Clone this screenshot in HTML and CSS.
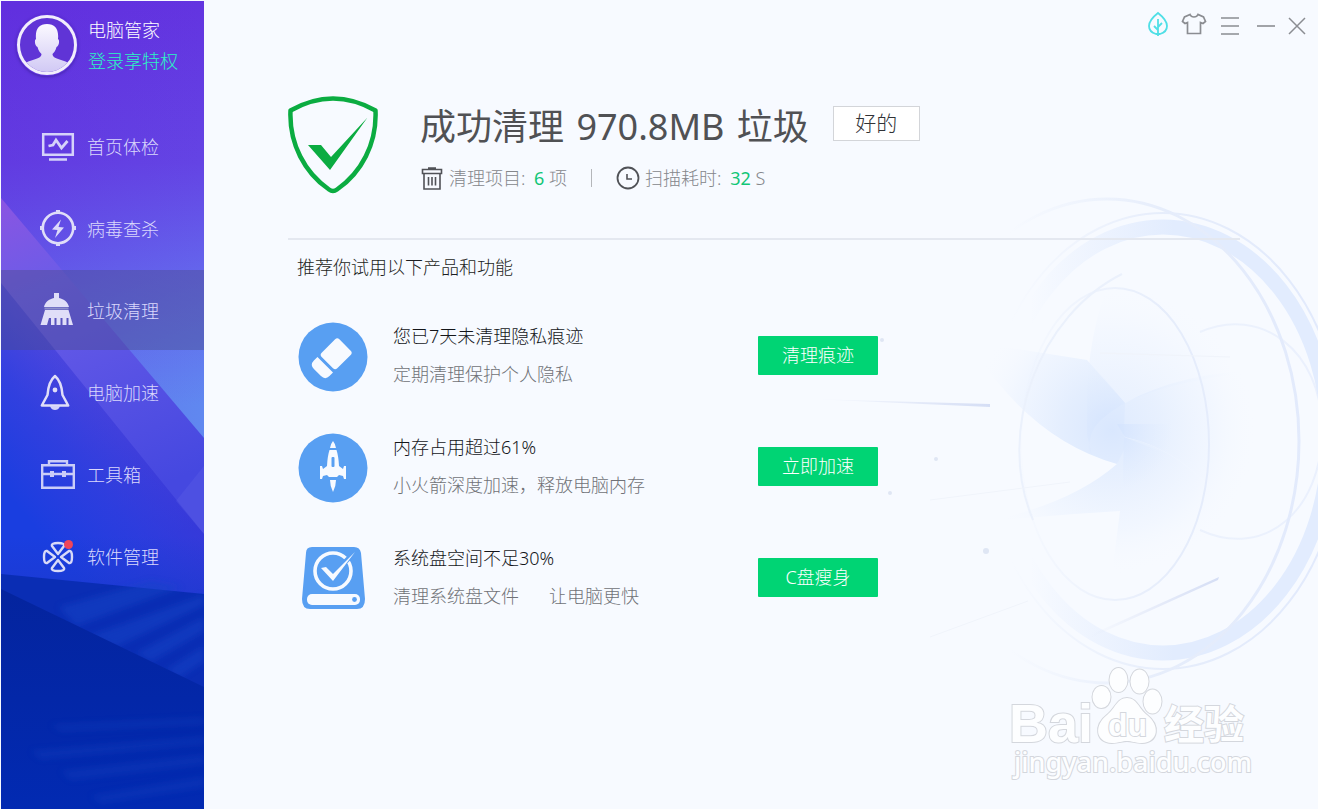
FILE: index.html
```html
<!DOCTYPE html>
<html lang="zh-CN">
<head>
<meta charset="utf-8">
<title>电脑管家</title>
<link rel="stylesheet" href="styles.css">
</head>
<body>
<div class="app">
  <aside class="sidebar">
    <svg class="sidebar-art" viewBox="0 0 203 808" preserveAspectRatio="none" aria-hidden="true">
      <defs>
        <linearGradient id="base" x1="0" y1="0" x2="0" y2="1">
          <stop offset="0" stop-color="#6334e0"/>
          <stop offset=".2" stop-color="#6444e4"/>
          <stop offset=".33" stop-color="#6464ec"/>
          <stop offset=".5" stop-color="#6088f0"/>
          <stop offset="1" stop-color="#6088f0"/>
        </linearGradient>
        <linearGradient id="left" x1="0" y1="0" x2="1" y2="0">
          <stop offset="0" stop-color="#5a1fd8" stop-opacity=".25"/>
          <stop offset="1" stop-color="#5a1fd8" stop-opacity="0"/>
        </linearGradient>
        <linearGradient id="band" x1="0" y1="200" x2="120" y2="500" gradientUnits="userSpaceOnUse">
          <stop offset="0" stop-color="#8a55e2"/>
          <stop offset=".3" stop-color="#6a5ce8"/>
          <stop offset="1" stop-color="#4548e0"/>
        </linearGradient>
        <linearGradient id="band2" x1="0" y1="280" x2="110" y2="560" gradientUnits="userSpaceOnUse">
          <stop offset="0" stop-color="#584ce0"/>
          <stop offset="1" stop-color="#3838d8"/>
        </linearGradient>
        <linearGradient id="deep" x1="120" y1="405" x2="10" y2="498" gradientUnits="userSpaceOnUse">
          <stop offset="0" stop-color="#2b3fe0" stop-opacity="0"/>
          <stop offset=".5" stop-color="#263ee0" stop-opacity=".7"/>
          <stop offset="1" stop-color="#1a3ee0"/>
        </linearGradient>
        <linearGradient id="floor" x1="0" y1="0" x2="0" y2="1">
          <stop offset="0" stop-color="#04249e"/>
          <stop offset="1" stop-color="#022ab2"/>
        </linearGradient>
        <linearGradient id="dusk" x1="0" y1="0" x2="0" y2="1">
          <stop offset="0" stop-color="#1c38cc" stop-opacity="0"/>
          <stop offset="1" stop-color="#1c38cc" stop-opacity=".7"/>
        </linearGradient>
        <filter id="soft" x="-20%" y="-20%" width="140%" height="140%"><feGaussianBlur stdDeviation="3"/></filter>
      </defs>
      <rect width="203" height="808" fill="url(#base)"/>
      <rect width="203" height="808" fill="url(#left)"/>
      <path d="M0 197 203 437V808H0Z" fill="url(#band)"/>
      <path d="M0 282 203 533V808H0Z" fill="url(#band2)"/>
      <path d="M0 282 203 533V808H0Z" fill="url(#deep)"/>
      <path d="M203 465 175 500 203 533Z" fill="#6c74ec" opacity=".2"/>
      <path d="M0 535H203V600H0Z" fill="url(#dusk)"/>
      <path d="M0 573 203 593V808H0Z" fill="#0a2db4"/>
      <g fill="#1744c8" opacity=".5" filter="url(#soft)">
        <path d="M58 606 150 580 180 586 75 625Z"/>
        <path d="M88 635 203 594V604L115 646Z"/>
        <path d="M135 652 203 616V630L150 661Z"/>
        <path d="M165 669 203 645V660L178 677Z"/>
      </g>
      <path d="M0 588 203 686V808H0Z" fill="url(#floor)"/>
      <g fill="#1642c0" opacity=".35" filter="url(#soft)">
        <path d="M50 724 203 717V723L60 730Z"/>
        <path d="M30 750 203 736V743L40 758Z"/>
        <path d="M60 770 203 754V763L70 779Z"/>
        <path d="M90 795 203 776V786L100 802Z"/>
      </g>
    </svg>

    <div class="profile">
      <svg class="avatar" viewBox="0 0 62 62" aria-hidden="true">
        <defs>
          <clipPath id="face"><circle cx="31" cy="31" r="27"/></clipPath>
          <linearGradient id="pale" x1="0" y1="0" x2="0" y2="1">
            <stop offset="0" stop-color="#fbf9ff"/><stop offset="1" stop-color="#cfc7f4"/>
          </linearGradient>
        </defs>
        <circle cx="31" cy="31" r="28.500" fill="#6034d6" stroke="#f1edfc" stroke-width="3"/>
        <path clip-path="url(#face)" fill="url(#pale)" d="M31 10c-8 0-12 5-11 15-2 1-1 7 1.500 8 1 4 3 6 4 7 0 6-13 5-18 11 8 12 39 12 47 0-5-6-18-5-18-11 1-1 3-3 4-7 2.500-1 3.500-7 1.500-8C43 15 39 10 31 10Z"/>
      </svg>
      <div class="profile-text">
        <span class="product">电脑管家</span>
        <a class="login" href="#">登录享特权</a>
      </div>
    </div>

    <nav class="nav">
      <a class="nav-item" href="#">
        <svg class="nav-icon" viewBox="0 0 36 36" aria-hidden="true"><g fill="none" stroke="#d5d2fa" stroke-width="2.500"><path d="M3.200 6.200h29.600v20.600H3.200zM9 31.500h18"/><path d="m8.500 18 4.500-1 3-5 5.500 8 6-7" stroke-width="2.800"/></g></svg>
        <span>首页体检</span>
      </a>
      <a class="nav-item" href="#">
        <svg class="nav-icon" viewBox="0 0 36 36" aria-hidden="true"><circle cx="18" cy="18" r="15.200" fill="none" stroke="#e0def8" stroke-width="2.600"/><path d="M16 0h4v3h-4zM16 33h4v3h-4zM0 16h3v4H0zM33 16h3v4h-3zM21 9.500 12 19.500l5.500.500-2.500 8 9-10.500-5.500-.500z" fill="#dddafa"/></svg>
        <span>病毒查杀</span>
      </a>
      <a class="nav-item active" href="#" aria-current="page">
        <svg class="nav-icon" viewBox="0 0 36 36" aria-hidden="true"><path fill="#e0def8" d="M14 1h5v5c5 1 9 4 10 9H4c1-5 5-8 10-9zM5 18h23.500l4.500 15H28.500v-7h-2v7H22.500v-7h-2v7H16.500v-7h-2v7H11v-7H9l-2 7H.500z"/><path d="M4.500 16.500h24" stroke="#8f90cc" stroke-width="2"/></svg>
        <span>垃圾清理</span>
      </a>
      <a class="nav-item" href="#">
        <svg class="nav-icon" viewBox="0 0 36 36" aria-hidden="true"><path d="M15 2C9 7 8 14 7.500 21L1.800 31.500H28.200L22.500 21C22 14 21 7 15 2Z" fill="none" stroke="#e0def8" stroke-width="2.500" stroke-linejoin="round"/><circle cx="15" cy="16" r="2.400" fill="#e0def8"/><path d="M10 32h10c-1 3-3 4-5 4s-4-1-5-4Z" fill="#d5d4fa"/></svg>
        <span>电脑加速</span>
      </a>
      <a class="nav-item" href="#">
        <svg class="nav-icon" viewBox="0 0 36 36" aria-hidden="true"><g fill="none" stroke="#cbcdf8" stroke-width="2.400"><path d="M2.200 9.200h31.600v22.600H2.200zM9 9V5.200h18V9M2 18h32"/></g><path d="M10 15h4v6h-4zM22 15h4v6h-4z" fill="#cbcdf8"/></svg>
        <span>工具箱</span>
      </a>
      <a class="nav-item" href="#">
        <svg class="nav-icon" viewBox="0 0 36 36" aria-hidden="true"><g fill="none" stroke="#d8daf8" stroke-width="2.400" stroke-linejoin="round"><path d="M18 16 12 8q-1-3 6-3t6 3z"/><path d="m21 19 8-6q3-1 3 6t-3 6zM18 22l6 8q1 3-6 3t-6-3zM15 19l-8-6q-3-1-3 6t3 6z"/></g><circle cx="28.500" cy="6.500" r="4.500" fill="#f0465a"/></svg>
        <span>软件管理</span>
      </a>
    </nav>
  </aside>

  <main class="main">
    <svg class="turbine" viewBox="750 180 568 520" aria-hidden="true">
      <defs>
        <linearGradient id="ring" x1="1030" y1="0" x2="1318" y2="0" gradientUnits="userSpaceOnUse">
          <stop offset="0" stop-color="#e2ecfe" stop-opacity="0"/><stop offset=".5" stop-color="#e2ecfe"/><stop offset="1" stop-color="#e2ecfe"/>
        </linearGradient>
        <linearGradient id="thin" x1="1010" y1="0" x2="1318" y2="0" gradientUnits="userSpaceOnUse">
          <stop offset="0" stop-color="#e6edfb" stop-opacity="0"/><stop offset=".5" stop-color="#e6edfb"/><stop offset="1" stop-color="#e2eafc"/>
        </linearGradient>
        <linearGradient id="streak" x1="0" y1="0" x2="1" y2="0">
          <stop offset="0" stop-color="#d9dff3" stop-opacity="0"/><stop offset="1" stop-color="#d5def5"/>
        </linearGradient>
        <radialGradient id="blade" cx="1112" cy="430" r="145" gradientUnits="userSpaceOnUse">
          <stop offset="0" stop-color="#d9e7fe"/><stop offset=".35" stop-color="#e4eefe"/><stop offset=".7" stop-color="#eff5ff" stop-opacity=".8"/><stop offset="1" stop-color="#f7faff" stop-opacity="0"/>
        </radialGradient>
        <radialGradient id="core" cx="1112" cy="430" r="60" gradientUnits="userSpaceOnUse">
          <stop offset="0" stop-color="#d3e3fe"/><stop offset="1" stop-color="#e2edfe" stop-opacity="0"/>
        </radialGradient>
      </defs>
      <g fill="url(#blade)">
        <path d="M1125 403 1087 360 960 340 1000 385Q1050 445 1117 464L1124 450V430Z"/>
        <path d="M1125 403 1087 430Q1084 350 1106 290L1220 290 1230 375Q1160 385 1125 403Z" opacity=".55"/>
        <path d="M1125 403Q1180 372 1270 369L1270 560 1240 525Q1190 450 1124 437L1110 424Z" opacity=".8"/>
        <path d="M1124 437Q1190 450 1240 525L1200 590H1110L1120 511Q1050 515 983 522 1070 505 1117 464Z" opacity=".8"/>
      </g>
      <g fill="url(#core)">
        <path d="M1125 403Q1095 420 1091 435T1092 455L1087 435V378L1100 373Z"/>
        <path d="M1117 424H1217L1203 480Q1165 445 1125 437Z"/>
        <path d="M1124 437 1170 455 1150 500 1122 505Z"/>
      </g>
      <g fill="none">
        <ellipse cx="1163" cy="440" rx="166" ry="213" stroke="url(#ring)" stroke-width="15"/>
        <ellipse cx="1163" cy="441" rx="178" ry="228" stroke="url(#thin)" stroke-width="2"/>
        <ellipse cx="1107" cy="441" rx="192" ry="242" stroke="url(#thin)" stroke-width="3"/>
        <ellipse cx="1115" cy="444" rx="94" ry="156" stroke="url(#thin)" stroke-width="2"/>
        <path d="M1122 274C1040 315 995 430 1033 520" stroke="#ebf1fc" stroke-width="2"/>
        <path d="M1200 332C1260 305 1322 350 1322 430S1265 560 1200 530" stroke="url(#thin)" stroke-width="2" opacity=".6"/>
      </g>
      <path d="m810 399 180 5v3Z" fill="url(#streak)"/>
      <path d="m1090 635 129-58-1 3-128 58Z" fill="url(#streak)"/>
      <path d="m930 637 98-36M930 500l140-18M1100 353l130 4" fill="none" stroke="#f0f4fb"/>
      <g fill="#dfe6f4"><circle cx="882" cy="340" r="2"/><circle cx="890" cy="493" r="2"/><circle cx="936" cy="459" r="2"/><circle cx="986" cy="551" r="3"/></g>
    </svg>

    <header class="window-bar">
      <button class="bar-btn" type="button" aria-label="清新模式"><svg viewBox="0 0 26 26"><path d="M13 2q-9 7-9 13 0 6 7 8h4q7-2 7-8 0-6-9-13ZM13 8v17M13 19l-4-4M13 16l4-4" fill="none" stroke="#4fdfe6" stroke-width="1.800"/></svg></button>
      <button class="bar-btn" type="button" aria-label="皮肤"><svg viewBox="0 0 26 26"><path d="M9 3.500 3.500 6 1.500 10.500 4 12.500l2.500-1V22.500h13V11.500l2.500 1 2.500-2L22.500 6 17 3.500q-1 2.500-4 2.500T9 3.500Z" fill="none" stroke="#8b8d92" stroke-width="1.700"/></svg></button>
      <button class="bar-btn" type="button" aria-label="菜单"><svg viewBox="0 0 26 26"><path d="M4 7h18M4 15h18M4 23h18" stroke="#8b8d92" stroke-width="1.600"/></svg></button>
      <button class="bar-btn" type="button" aria-label="最小化"><svg viewBox="0 0 26 26"><path d="M4 15h18" stroke="#8b8d92" stroke-width="1.600"/></svg></button>
      <button class="bar-btn close" type="button" aria-label="关闭"><svg viewBox="0 0 26 26"><path d="m5 7 16 16M21 7 5 23" stroke="#8b8d92" stroke-width="1.500"/></svg></button>
    </header>

    <section class="result">
      <svg class="shield" viewBox="0 0 90 98" aria-hidden="true">
        <path d="M2.500 14.500Q45-9.500 87.500 14.500C89 48 73 77 49 93.500Q45 96.500 41 93.500C17 77 1 48 2.500 14.500Z" fill="none" stroke="#0bac41" stroke-width="4.500" stroke-linejoin="round"/>
        <path d="M20 49h13l10 12 36.500-39.500L42 74Z" fill="#0bac41"/>
      </svg>
      <div class="result-text">
        <div class="title-row">
          <h1>成功清理 <span class="amount">970.8MB</span> 垃圾</h1>
          <button class="ok-btn" type="button">好的</button>
        </div>
        <div class="stats">
          <svg class="trash" viewBox="0 0 24 26" aria-hidden="true"><path d="M2.500 4.500h19v4h-19zM4 8.500v15.500h16V8.500M8.500 12v8.500M12 12v8.500M15.500 12v8.500M8 3h8" fill="none" stroke="#505257" stroke-width="1.600"/></svg>
          <span>清理项目: <b>6</b> 项</span>
          <i class="divider"></i>
          <svg class="clock" viewBox="0 0 24 24" aria-hidden="true"><circle cx="12" cy="12" r="10.500" fill="none" stroke="#505257" stroke-width="1.800"/><path d="M11 8v5h5" fill="none" stroke="#505257" stroke-width="1.600"/></svg>
          <span>扫描耗时: <b>32</b> S</span>
        </div>
      </div>
    </section>

    <section class="suggest">
      <h2>推荐你试用以下产品和功能</h2>
      <ul class="cards">
        <li class="card">
          <svg class="card-icon" viewBox="0 0 70 70" aria-hidden="true"><circle cx="35" cy="35" r="34.500" fill="#589ff2"/><g transform="translate(35 35) rotate(-45)" fill="#f7faff"><rect x="-8" y="-11" width="25" height="22" rx="3"/><path d="M-11-11v22h-5q-6 0-6-6V-5q0-6 6-6z"/></g></svg>
          <div class="card-text"><h3>您已7天未清理隐私痕迹</h3><p>定期清理保护个人隐私</p></div>
          <button class="action" type="button">清理痕迹</button>
        </li>
        <li class="card">
          <svg class="card-icon" viewBox="0 0 70 70" aria-hidden="true"><circle cx="35" cy="35" r="34.500" fill="#589ff2"/><g fill="#f7faff"><path d="M35 8q2.500 3 3 7h-6q.500-4 3-7ZM31.500 17h7q2 6 2.500 16l4 3 1-3h2v13h-2l-1-3-4-1-2 2h-8l-2-2-4 1-1 3h-2V33h2l1 3 4-3q.500-10 2.500-16ZM32 47h6q0 6-3 12-3-6-3-12Z"/></g><rect x="33.500" y="24" width="3" height="10" rx="1" fill="#589ff2"/></svg>
          <div class="card-text"><h3>内存占用超过61%</h3><p>小火箭深度加速，释放电脑内存</p></div>
          <button class="action" type="button">立即加速</button>
        </li>
        <li class="card">
          <svg class="card-icon" viewBox="0 0 70 70" aria-hidden="true"><path d="M14 3h42q6 0 7 6l4 46q0 10-8 10H12q-8 0-8-10L8 9q0-6 6-6Z" fill="#589ff2"/><circle cx="35" cy="27" r="18" fill="none" stroke="#f7faff" stroke-width="3.600"/><path d="M56 9 46 19" stroke="#589ff2" stroke-width="5"/><path d="m23 24 5-1 7 7L57 8 35 37Z" fill="#f7faff"/><rect x="9" y="50" width="53" height="11" rx="5" fill="#f7faff"/><circle cx="56.500" cy="55.500" r="2.400" fill="#589ff2"/></svg>
          <div class="card-text"><h3>系统盘空间不足30%</h3><p><span>清理系统盘文件</span><span class="second">让电脑更快</span></p></div>
          <button class="action" type="button">C盘瘦身</button>
        </li>
      </ul>
    </section>

    <svg class="watermark" viewBox="0 0 260 120" aria-label="Baidu 经验">
      <g class="wm-shapes">
        <ellipse cx="99.500" cy="34" rx="9" ry="11"/><ellipse cx="116.500" cy="17" rx="9" ry="12"/><ellipse cx="137.500" cy="18.500" rx="9" ry="12"/><ellipse cx="150.500" cy="38.500" rx="9" ry="12"/>
        <path d="M125 35c-10 0-12 11-20 17-13 10-12 27 5 28 7 0 10-2 15-2s8 2 15 2c17-1 18-18 5-28-8-6-10-17-20-17Z"/>
        <text class="wm-bai" x="7" y="79">Bai</text>
        <text class="wm-du" x="106" y="73">du</text>
        <text class="wm-cjk" x="162" y="76">经验</text>
        <text class="wm-url" x="12" y="109">jingyan.baidu.com</text>
      </g>
    </svg>
  </main>
</div>
</body>
</html>
```

FILE: styles.css
```css
* { box-sizing: border-box; }

body {
  margin: 0;
  font-family: "Noto Sans", "Noto Sans CJK SC", sans-serif;
  font-size: 18px;
  font-weight: 300;
  line-height: 24px;
  background: #f7faff;
}

h1, h2, h3, p, ul { margin: 0; padding: 0; font-weight: 300; }
a { color: inherit; text-decoration: none; }
button { font: inherit; cursor: pointer; }
svg { display: block; flex: none; }

.app {
  display: flex;
  min-height: 100vh;
  padding: 1px 0 0 1px;
}

/* Sidebar */
.sidebar {
  position: relative;
  flex: none;
  width: 203px;
  overflow: hidden;
}
.sidebar-art {
  position: absolute;
  inset: 0;
  width: 100%;
  height: 100%;
}
.profile {
  position: relative;
  display: flex;
  gap: 10px;
  height: 105px;
  padding: 13px 0 0 15px;
}
.avatar {
  width: 62px;
  height: 62px;
  border-radius: 50%;
  box-shadow: 0 1px 3px rgba(40, 20, 120, .5);
}
.profile-text {
  display: flex;
  flex-direction: column;
  gap: 7px;
  padding-top: 4px;
  color: #fff;
}
.login { color: #2cf4c4; }
.nav {
  position: relative;
  display: flex;
  flex-direction: column;
  gap: 2px;
}
.nav-item {
  display: flex;
  align-items: center;
  gap: 11px;
  height: 80px;
  padding-left: 39px;
  color: #dad8fc;
}
.nav-item span { padding-top: 1px; }
.nav-item.active { background: rgba(72, 76, 130, .4); }
.nav-icon { width: 36px; height: 36px; }

/* Main area */
.main {
  position: relative;
  flex: 1;
  min-width: 0;
  padding: 0 78px 0 84px;
}
.turbine {
  position: absolute;
  top: 179px;
  right: 0;
  width: 568px;
  height: 520px;
}
.window-bar {
  position: relative;
  display: flex;
  justify-content: flex-end;
  gap: 10px;
  margin-right: -70px;
  padding-top: 10px;
}
.bar-btn {
  width: 26px;
  height: 26px;
  padding: 0;
  border: 0;
  background: none;
}
.bar-btn.close { margin-left: -5px; }
.result {
  position: relative;
  display: flex;
  gap: 42px;
  height: 203px;
  padding-top: 59px;
  border-bottom: 2px solid #e4e8f0;
}
.shield { width: 90px; height: 98px; }
.title-row {
  display: flex;
  align-items: center;
  gap: 24px;
  padding-top: 5px;
}
.title-row h1 {
  font-size: 36px;
  font-weight: 400;
  line-height: 52px;
  color: #505154;
  white-space: nowrap;
}
.amount { margin: 0 3px; }
.ok-btn {
  width: 87px;
  height: 35px;
  margin-bottom: 8px;
  padding: 0;
  border: 1px solid #d3d5d9;
  background: #fff;
  color: #303236;
  font-size: 21px;
}
.stats {
  display: flex;
  align-items: center;
  margin-top: 12px;
  color: #85878b;
}
.stats b { margin-left: 4px; font-weight: 400; color: #12c677; }
.trash { width: 24px; height: 26px; margin-right: 5px; }
.divider {
  width: 1px;
  height: 18px;
  margin: 0 24px;
  background: #b4b6ba;
}
.clock { width: 24px; height: 24px; margin-right: 5px; }

.suggest { position: relative; padding: 15px 0 0 9px; }
.suggest h2 { font-size: 18px; color: #1c1e22; }
.cards {
  display: flex;
  flex-direction: column;
  gap: 41px;
  padding-top: 43px;
  list-style: none;
}
.card {
  display: flex;
  align-items: flex-start;
  height: 70px;
  padding-left: 1px;
}
.card-icon { width: 70px; height: 70px; }
.card-text { width: 365px; margin-left: 25px; padding-top: 2px; }
.card-text h3 { font-size: 18px; color: #14161a; }
.card-text p { margin-top: 14px; color: #707277; }
.second { margin-left: 30px; }
.action {
  width: 120px;
  height: 39px;
  margin-top: 14px;
  padding: 0 0 2px;
  border: 0;
  border-radius: 1px;
  background: #00d474;
  color: #fff;
}

/* Watermark */
.watermark {
  position: absolute;
  right: 56px;
  bottom: 26px;
  width: 260px;
  height: 120px;
}
.wm-shapes {
  fill: #fdfeff;
  stroke: #d4d7dd;
  stroke-width: 2px;
  paint-order: stroke;
}
.wm-bai, .wm-du { font-family: "Liberation Sans", sans-serif; font-weight: 700; }
.wm-bai { font-size: 54px; }
.wm-du { font-size: 32px; }
.wm-cjk { font-family: "Noto Sans CJK SC", sans-serif; font-size: 40px; font-weight: 700; }
.wm-url { font-family: "Noto Sans", sans-serif; font-size: 27px; font-weight: 500; }
```
